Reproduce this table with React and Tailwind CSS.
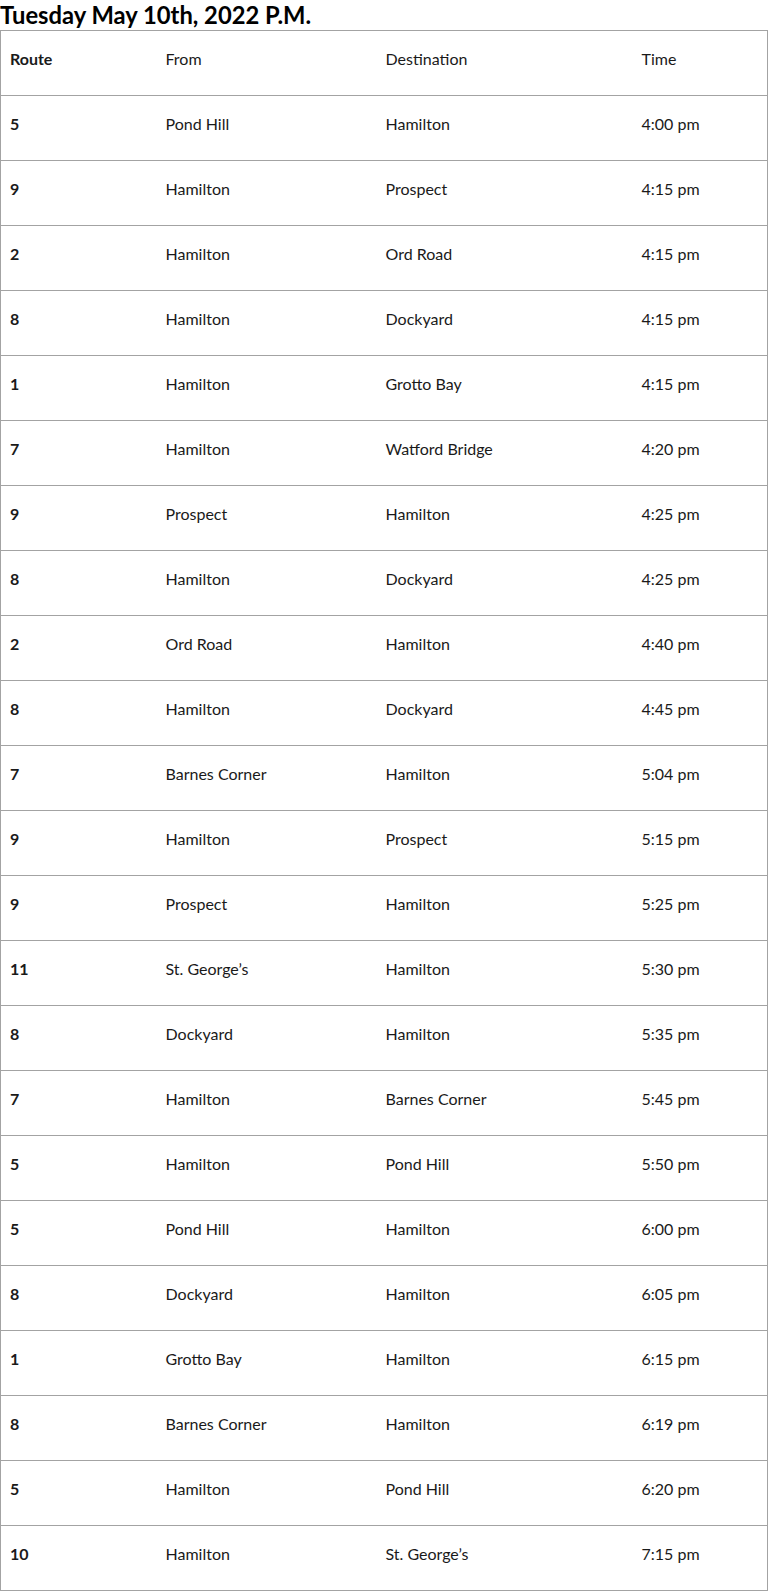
const rows = [
  ["5", "Pond Hill", "Hamilton", "4:00 pm"],
  ["9", "Hamilton", "Prospect", "4:15 pm"],
  ["2", "Hamilton", "Ord Road", "4:15 pm"],
  ["8", "Hamilton", "Dockyard", "4:15 pm"],
  ["1", "Hamilton", "Grotto Bay", "4:15 pm"],
  ["7", "Hamilton", "Watford Bridge", "4:20 pm"],
  ["9", "Prospect", "Hamilton", "4:25 pm"],
  ["8", "Hamilton", "Dockyard", "4:25 pm"],
  ["2", "Ord Road", "Hamilton", "4:40 pm"],
  ["8", "Hamilton", "Dockyard", "4:45 pm"],
  ["7", "Barnes Corner", "Hamilton", "5:04 pm"],
  ["9", "Hamilton", "Prospect", "5:15 pm"],
  ["9", "Prospect", "Hamilton", "5:25 pm"],
  ["11", "St. George’s", "Hamilton", "5:30 pm"],
  ["8", "Dockyard", "Hamilton", "5:35 pm"],
  ["7", "Hamilton", "Barnes Corner", "5:45 pm"],
  ["5", "Hamilton", "Pond Hill", "5:50 pm"],
  ["5", "Pond Hill", "Hamilton", "6:00 pm"],
  ["8", "Dockyard", "Hamilton", "6:05 pm"],
  ["1", "Grotto Bay", "Hamilton", "6:15 pm"],
  ["8", "Barnes Corner", "Hamilton", "6:19 pm"],
  ["5", "Hamilton", "Pond Hill", "6:20 pm"],
  ["10", "Hamilton", "St. George’s", "7:15 pm"],
];

// horizontal rules only, outer frame comes from the table
const cell = "h-[65px] border-y border-[#a3a3a3] pl-[9px] pt-[16px] leading-[24px] text-left align-top";

export default function App() {
  return (
    <div className="bg-white text-[#1a1a1a] font-['Lato','Liberation_Sans',sans-serif]">
      <h2 className="text-[23.75px] leading-[30px] font-bold text-black">
        Tuesday May 10th, 2022 P.M.
      </h2>
      <table className="w-[767px] border-collapse border border-[#a3a3a3] table-fixed text-[16px]">
        <colgroup>
          <col className="w-[156px]" />
          <col className="w-[220px]" />
          <col className="w-[256px]" />
          <col className="w-[135px]" />
        </colgroup>
        <tbody>
          <tr>
            <td className={`${cell} font-bold`}>Route</td>
            <td className={cell}>From</td>
            <td className={cell}>Destination</td>
            <td className={cell}>Time</td>
          </tr>
          {rows.map((r, i) => (
            <tr key={i}>
              <td className={`${cell} font-bold`}>{r[0]}</td>
              <td className={cell}>{r[1]}</td>
              <td className={cell}>{r[2]}</td>
              <td className={cell}>{r[3]}</td>
            </tr>
          ))}
        </tbody>
      </table>
    </div>
  );
}
